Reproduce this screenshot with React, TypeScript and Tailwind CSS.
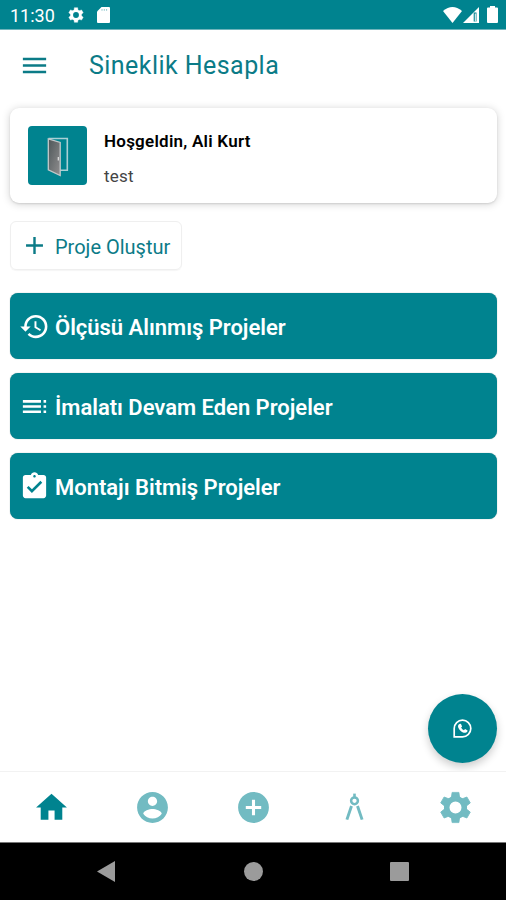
import { type ReactNode } from 'react';
import { clsx } from 'clsx';
import { MdAdd, MdAddCircle, MdAssignmentTurnedIn, MdHistory, MdHome, MdMenu, MdToc } from 'react-icons/md';

const projectLinks = [
  { title: 'Ölçüsü Alınmış Projeler', icon: MdHistory },
  { title: 'İmalatı Devam Eden Projeler', icon: MdToc },
  { title: 'Montajı Bitmiş Projeler', icon: MdAssignmentTurnedIn },
];

const tabs = [
  { name: 'home', icon: MdHome },
  { name: 'account', icon: AccountIcon },
  { name: 'add', icon: MdAddCircle },
  { name: 'measure', icon: CompassIcon },
  { name: 'settings', icon: GearIcon },
];

export default function App() {
  return (
    <div className="relative flex h-[900px] w-[506px] flex-col overflow-hidden bg-white font-['Roboto',sans-serif]">
      <StatusBar />

      <header className="flex h-[70px] items-center pl-[19px] text-[#0b7b87]">
        <MdMenu className="h-[31px] w-[31px]" />
        <h1 className="ml-[39px] pt-[1px] text-[25px] leading-none font-[450] tracking-[0.45px]">Sineklik Hesapla</h1>
      </header>

      <main className="flex flex-1 flex-col pt-[8px] pr-[9px] pl-[10px]">
        <WelcomeCard />

        <button className="mt-[18px] flex h-[49px] w-[172px] items-center rounded-md border border-[#efefef] pl-[9px] text-[#0b7b87] shadow-[0_1px_1px_rgba(0,0,0,0.04)]">
          <MdAdd className="h-[29px] w-[29px]" />
          <span className="ml-[6px] pt-[2px] text-[20px] leading-none font-[450] whitespace-nowrap">Proje Oluştur</span>
        </button>

        <div className="mt-[23px] flex flex-col gap-[14px]">
          {projectLinks.map((link) => (
            <ProjectButton key={link.title} icon={<link.icon className="h-[31px] w-[31px]" />}>
              {link.title}
            </ProjectButton>
          ))}
        </div>
      </main>

      {/* WhatsApp support button, floats over the content */}
      <button className="absolute top-[694px] left-[428px] flex h-[69px] w-[69px] items-center justify-center rounded-full bg-[#00838f] text-white shadow-[0_4px_8px_rgba(0,0,0,0.2)]">
        <WhatsappIcon />
      </button>

      <nav className="relative grid h-[71px] grid-cols-5 place-items-center border-t border-[#f2f2f2] bg-white pl-[1px]">
        {tabs.map((tab, i) => (
          <tab.icon key={tab.name} className={clsx('h-[37px] w-[37px]', i === 0 ? 'text-[#00838f]' : 'text-[#72bbc2]')} />
        ))}
      </nav>

      <AndroidNav />
    </div>
  );
}

function StatusBar() {
  return (
    <div className="flex h-[30px] items-center border-b border-[#6fb4bb] bg-[#00838f] pr-[8px] pl-[10px] text-white">
      <span className="w-[57px] pt-[3px] text-[18px] leading-none">11:30</span>
      <GearIcon className="mt-[1px] h-[18px] w-[18px]" />
      <svg className="mt-[1px] ml-[12px]" width="13" height="16" viewBox="0 0 13 16" fill="currentColor">
        <path d="M4.5 0H12q1 0 1 1v14q0 1-1 1H1q-1 0-1-1V4.5z" />
        <path d="M4.5 2h1v1.8h-1zM6.8 2h1v1.8h-1zM9.1 2h1v1.8h-1z" fill="#8fc7cd" />
      </svg>
      <svg className="ml-auto" width="19" height="16" viewBox="0 0 19 16" fill="currentColor">
        <path d="M0 4Q9.5-4 19 4L9.5 16z" />
      </svg>
      <svg className="ml-[1px]" width="16" height="16" viewBox="0 0 16 16" fill="currentColor">
        <path d="M16 0v16H0z" />
        <path d="M10.7 5.5h2.8v9h-2.8z" fill="#00838f" />
        <path d="M11.8 6.5h1v8h-1z" />
      </svg>
      <svg className="ml-[8px]" width="11" height="17" viewBox="0 0 11 17" fill="currentColor">
        <path d="M3 0h5v1.5h2q1 0 1 1V16q0 1-1 1H1q-1 0-1-1V2.5q0-1 1-1h2z" />
      </svg>
    </div>
  );
}

function WelcomeCard() {
  return (
    <section className="flex h-[95px] items-center rounded-[9px] bg-white pl-[18px] shadow-[0_1px_8px_rgba(0,0,0,0.18),0_1px_2px_rgba(0,0,0,0.1)]">
      <div className="flex h-[59px] w-[59px] items-center justify-center rounded-[4px] bg-[#00838f]">
        <DoorIcon />
      </div>
      <div className="ml-[17px] flex flex-col pt-[6px] text-black">
        <span className="text-[17px] leading-[20px] font-semibold tracking-[0.24px]">Hoşgeldin, Ali Kurt</span>
        <span className="mt-[15px] text-[17px] leading-[20px] tracking-[0.2px] text-[#444]">test</span>
      </div>
    </section>
  );
}

function ProjectButton({ icon, children }: { icon: ReactNode; children: ReactNode }) {
  return (
    <button className="flex h-[66px] items-center rounded-[8px] bg-[#00838f] pl-[9px] text-white shadow-[0_0_1px_rgba(0,60,66,0.5)]">
      {icon}
      <span className="ml-[5px] pt-[3px] text-[22px] leading-none font-semibold tracking-[-0.02px] whitespace-nowrap">{children}</span>
    </button>
  );
}

function AndroidNav() {
  return (
    <div className="flex h-[58px] items-center border-t border-[#777] bg-black text-[#9b9b9b]">
      <svg className="ml-[97px]" width="18" height="21" viewBox="0 0 18 21" fill="currentColor">
        <path d="M18 0v21L0 10.5z" />
      </svg>
      <div className="ml-[129px] h-[19px] w-[19px] rounded-full bg-[#9b9b9b]" />
      <div className="ml-[127px] h-[19px] w-[19px] rounded-[1px] bg-[#9b9b9b]" />
    </div>
  );
}

function DoorIcon() {
  return (
    <svg className="mt-[2px]" width="22" height="40" viewBox="0 0 22 40" fill="none">
      <defs>
        <linearGradient id="doorPanel" x1="0" y1="0" x2="1" y2="1">
          <stop offset="0%" stopColor="#4d5658" />
          <stop offset="100%" stopColor="#918f90" />
        </linearGradient>
      </defs>
      <path d="M1.5 1.5h18.8v31.8H13" stroke="#a9d0d5" strokeWidth="1.6" />
      <path d="M1.3 1.8l11.9 3.7v33L1.3 32.8z" fill="url(#doorPanel)" stroke="#c3c9ca" strokeWidth="1.3" />
      <path d="M11.3 20v3.5" stroke="#e3e3e3" strokeWidth="1.2" />
    </svg>
  );
}

function AccountIcon({ className }: { className?: string }) {
  return (
    <svg className={className} viewBox="0 0 24 24" fill="currentColor">
      <path d="M12 2C6.48 2 2 6.48 2 12s4.48 10 10 10 10-4.48 10-10S17.52 2 12 2zm0 3c1.66 0 3 1.34 3 3s-1.34 3-3 3-3-1.34-3-3 1.34-3 3-3zm0 14.2c-2.5 0-4.71-1.28-6-3.22.03-1.99 4-3.08 6-3.08 1.99 0 5.97 1.09 6 3.08-1.29 1.94-3.5 3.22-6 3.22z" />
    </svg>
  );
}

function CompassIcon({ className }: { className?: string }) {
  return (
    <svg className={className} viewBox="0 0 37 37" fill="none" stroke="currentColor">
      <circle cx="18.5" cy="11.8" r="3.4" strokeWidth="2.5" />
      <path d="M18.5 4.6v4" strokeWidth="2.6" />
      <path d="M15.5 17L10.9 30.6M21.5 17l4.6 13.6" strokeWidth="2.9" />
    </svg>
  );
}

function GearIcon({ className }: { className?: string }) {
  return (
    <svg className={className} viewBox="0 0 24 24" fill="none" stroke="currentColor">
      <circle cx="12" cy="12" r="5.7" strokeWidth="3.6" />
      {[0, 60, 120, 180, 240, 300].map((angle) => (
        <path key={angle} d="M9.2 6.2L9.8 2.2h4.4l.6 4z" fill="currentColor" strokeWidth="0.5" transform={`rotate(${angle} 12 12)`} />
      ))}
    </svg>
  );
}

function WhatsappIcon() {
  return (
    <svg className="-mt-[1px]" width="19" height="19" viewBox="0 0 19 19" fill="none">
      <path d="M1.2 17.8V9.5a8.3 8.3 0 1 1 8.3 8.3z" stroke="currentColor" strokeWidth="1.7" />
      <path
        d="M6.4 4.9l1.5-.2 1.2 2.7-1 1.2q1 1.9 2.8 2.7l1.2-1.2 2.5 1.3q.1 2-2.1 2.4C9 14.2 5 10.2 5 7q.2-1.5 1.4-2.1z"
        fill="currentColor"
      />
    </svg>
  );
}
